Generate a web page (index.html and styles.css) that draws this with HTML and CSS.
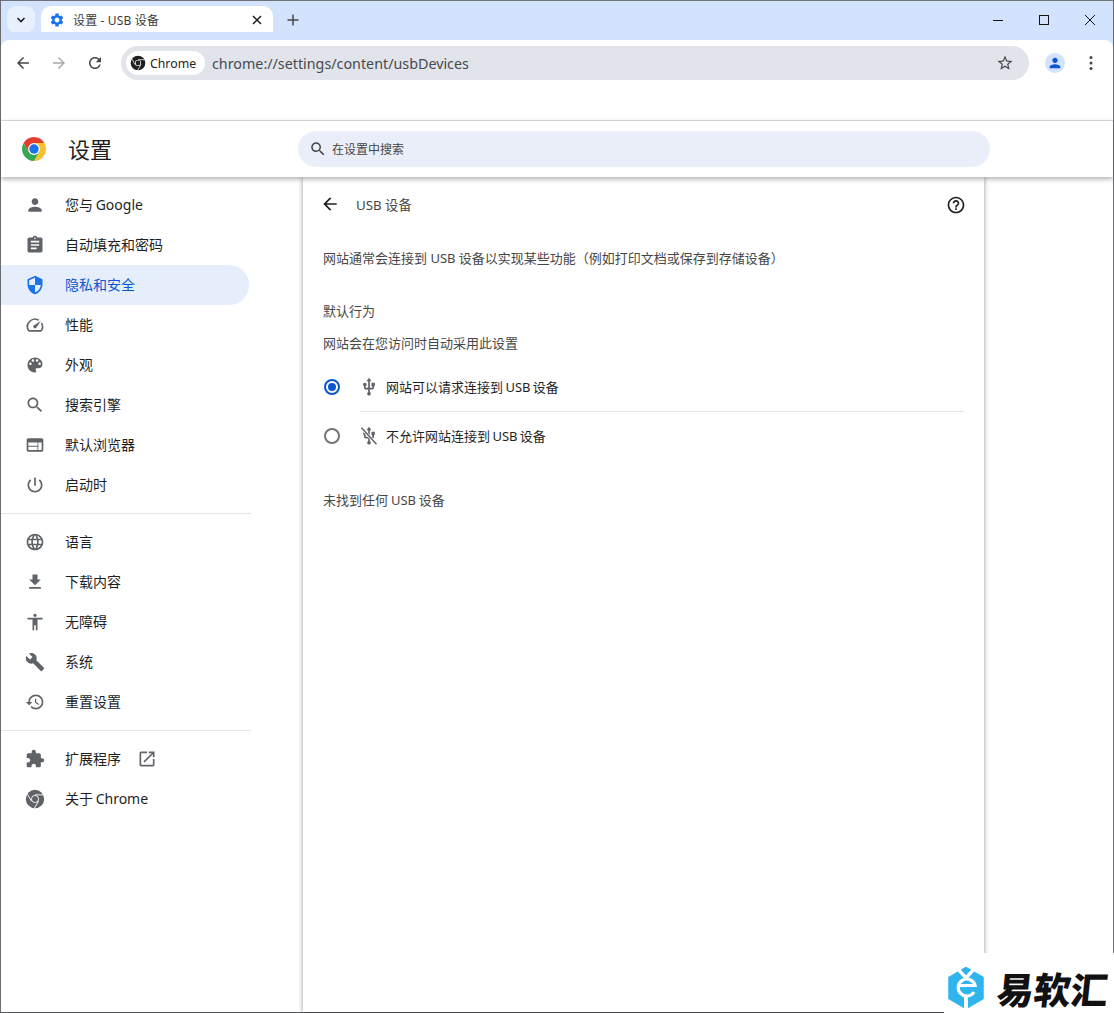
FILE: index.html
```html
<!DOCTYPE html>
<html lang="zh-CN">
<head>
<meta charset="utf-8">
<title>设置 - USB 设备</title>
<link rel="stylesheet" href="styles.css">
</head>
<body>
<svg class="sprite" width="0" height="0" aria-hidden="true">
  <defs>
    <symbol id="i-person" viewBox="0 0 24 24"><path d="M12 12c2.21 0 4-1.79 4-4s-1.79-4-4-4-4 1.79-4 4 1.79 4 4 4zm0 2c-2.67 0-8 1.34-8 4v2h16v-2c0-2.66-5.33-4-8-4z"/></symbol>
    <symbol id="i-assign" viewBox="0 0 24 24"><path d="M19 3h-4.18C14.4 1.84 13.3 1 12 1c-1.3 0-2.4.84-2.82 2H5c-1.1 0-2 .9-2 2v14c0 1.1.9 2 2 2h14c1.1 0 2-.9 2-2V5c0-1.1-.9-2-2-2zm-7 0c.55 0 1 .45 1 1s-.45 1-1 1-1-.45-1-1 .45-1 1-1zm2 14H7v-2h7v2zm3-4H7v-2h10v2zm0-4H7V7h10v2z"/></symbol>
    <symbol id="i-shield" viewBox="0 0 24 24"><path d="M12 1L3 5v6c0 5.55 3.84 10.74 9 12 5.16-1.26 9-6.45 9-12V5l-9-4zm0 10.99h7c-.53 4.12-3.28 7.79-7 8.94V12H5V6.3l7-3.11v8.8z"/></symbol>
    <symbol id="i-speed" viewBox="0 0 24 24"><path d="M20.38 8.57l-1.23 1.85a8 8 0 0 1-.22 7.58H5.07A8 8 0 0 1 15.58 6.85l1.85-1.23A10 10 0 0 0 3.35 19a2 2 0 0 0 1.72 1h13.85a2 2 0 0 0 1.74-1 10 10 0 0 0-.27-10.44zm-9.79 6.84a2 2 0 0 0 2.83 0l5.66-8.49-8.49 5.66a2 2 0 0 0 0 2.83z"/></symbol>
    <symbol id="i-palette" viewBox="0 0 24 24"><path d="M12 3c-4.97 0-9 4.03-9 9s4.03 9 9 9c.83 0 1.5-.67 1.5-1.5 0-.39-.15-.74-.39-1.01-.23-.26-.38-.61-.38-.99 0-.83.67-1.5 1.5-1.5H16c2.76 0 5-2.24 5-5 0-4.42-4.03-8-9-8zm-5.5 9c-.83 0-1.5-.67-1.5-1.5S5.67 9 6.5 9 8 9.67 8 10.5 7.33 12 6.5 12zm3-4C8.67 8 8 7.33 8 6.5S8.67 5 9.5 5s1.5.67 1.5 1.5S10.33 8 9.5 8zm5 0c-.83 0-1.5-.67-1.5-1.5S13.67 5 14.5 5s1.5.67 1.5 1.5S15.33 8 14.5 8zm3 4c-.83 0-1.5-.67-1.5-1.5S16.67 9 17.5 9s1.5.67 1.5 1.5-.67 1.5-1.5 1.5z"/></symbol>
    <symbol id="i-search" viewBox="0 0 24 24"><path d="M15.5 14h-.79l-.28-.27C15.41 12.59 16 11.11 16 9.5 16 5.91 13.09 3 9.5 3S3 5.91 3 9.5 5.91 16 9.5 16c1.61 0 3.09-.59 4.23-1.57l.27.28v.79l5 4.99L20.49 19l-4.99-5zm-6 0C7.01 14 5 11.99 5 9.5S7.01 5 9.5 5 14 7.01 14 9.5 11.99 14 9.5 14z"/></symbol>
    <symbol id="i-web" viewBox="0 0 24 24"><path d="M20 4H4c-1.1 0-1.99.9-1.99 2L2 18c0 1.1.9 2 2 2h16c1.1 0 2-.9 2-2V6c0-1.1-.9-2-2-2zm-5 14H4v-4h11v4zm0-5H4V9h11v4zm5 5h-4V9h4v9z"/></symbol>
    <symbol id="i-power" viewBox="0 0 24 24"><path d="M13 3h-2v10h2V3zm4.83 2.17l-1.42 1.42C17.99 7.86 19 9.81 19 12c0 3.87-3.13 7-7 7s-7-3.13-7-7c0-2.19 1.01-4.14 2.58-5.42L6.17 5.17C4.23 6.82 3 9.26 3 12c0 4.97 4.03 9 9 9s9-4.03 9-9c0-2.74-1.23-5.18-3.17-6.83z"/></symbol>
    <symbol id="i-lang" viewBox="0 0 24 24"><path d="M11.99 2C6.47 2 2 6.48 2 12s4.47 10 9.99 10C17.52 22 22 17.52 22 12S17.52 2 11.99 2zm6.93 6h-2.95c-.32-1.25-.78-2.45-1.38-3.56 1.84.63 3.37 1.91 4.33 3.56zM12 4.04c.83 1.2 1.48 2.53 1.91 3.96h-3.82c.43-1.43 1.08-2.76 1.91-3.96zM4.26 14C4.1 13.36 4 12.69 4 12s.1-1.36.26-2h3.38c-.08.66-.14 1.32-.14 2 0 .68.06 1.34.14 2H4.26zm.82 2h2.95c.32 1.25.78 2.45 1.38 3.56-1.84-.63-3.37-1.9-4.33-3.56zm2.95-8H5.08c.96-1.66 2.49-2.93 4.33-3.56C8.81 5.55 8.35 6.75 8.03 8zM12 19.96c-.83-1.2-1.48-2.53-1.91-3.96h3.82c-.43 1.43-1.08 2.76-1.91 3.96zM14.34 14H9.66c-.09-.66-.16-1.32-.16-2 0-.68.07-1.35.16-2h4.68c.09.65.16 1.32.16 2 0 .68-.07 1.34-.16 2zm.25 5.56c.6-1.11 1.06-2.31 1.38-3.56h2.95c-.96 1.65-2.49 2.93-4.33 3.56zM16.36 14c.08-.66.14-1.32.14-2 0-.68-.06-1.34-.14-2h3.38c.16.64.26 1.31.26 2s-.1 1.36-.26 2h-3.38z"/></symbol>
    <symbol id="i-download" viewBox="0 0 24 24"><path d="M19 9h-4V3H9v6H5l7 7 7-7zM5 18v2h14v-2H5z"/></symbol>
    <symbol id="i-access" viewBox="0 0 24 24"><path d="M12 2c1.1 0 2 .9 2 2s-.9 2-2 2-2-.9-2-2 .9-2 2-2zm9 7h-6v13h-2v-6h-2v6H9V9H3V7h18v2z"/></symbol>
    <symbol id="i-build" viewBox="0 0 24 24"><path d="M22.7 19l-9.1-9.1c.9-2.3.4-5-1.5-6.9-2-2-5-2.4-7.4-1.3L9 6 6 9 1.6 4.7C.4 7.1.9 10.1 2.9 12.1c1.9 1.9 4.6 2.4 6.9 1.5l9.1 9.1c.4.4 1 .4 1.4 0l2.3-2.3c.5-.4.5-1.1.1-1.4z"/></symbol>
    <symbol id="i-restore" viewBox="0 0 24 24"><path d="M13 3c-4.97 0-9 4.03-9 9H1l3.89 3.89.07.14L9 12H6c0-3.87 3.13-7 7-7s7 3.13 7 7-3.13 7-7 7c-1.93 0-3.68-.79-4.94-2.06l-1.42 1.42C8.27 19.99 10.51 21 13 21c4.97 0 9-4.03 9-9s-4.03-9-9-9zm-1 5v5l4.28 2.54.72-1.21-3.5-2.08V8H12z"/></symbol>
    <symbol id="i-ext" viewBox="0 0 24 24"><path d="M20.5 11H19V7c0-1.1-.9-2-2-2h-4V3.5C13 2.12 11.88 1 10.5 1S8 2.12 8 3.5V5H4c-1.1 0-1.99.9-1.99 2v3.8H3.5c1.49 0 2.7 1.21 2.7 2.7s-1.21 2.7-2.7 2.7H2V20c0 1.1.9 2 2 2h3.8v-1.5c0-1.49 1.21-2.7 2.7-2.7 1.49 0 2.7 1.21 2.7 2.7V22H17c1.1 0 2-.9 2-2v-4h1.5c1.38 0 2.5-1.12 2.5-2.5S21.88 11 20.5 11z"/></symbol>
    <symbol id="i-open" viewBox="0 0 24 24"><path d="M19 19H5V5h7V3H5c-1.11 0-2 .9-2 2v14c0 1.1.89 2 2 2h14c1.1 0 2-.9 2-2v-7h-2v7zM14 3v2h3.59l-9.83 9.83 1.41 1.41L19 6.41V10h2V3h-7z"/></symbol>
    <symbol id="i-chrome" viewBox="0 0 24 24"><path fill-rule="evenodd" d="M12 1a11 11 0 1 0 0 22 11 11 0 0 0 0-22zM12 7.4a4.6 4.6 0 1 1 0 9.2 4.6 4.6 0 0 1 0-9.2z"/><circle cx="12" cy="12" r="3.6"/><path d="M12 7h10M7.7 14.5 2.7 5.8M16.3 14.5 11.3 23" fill="none" stroke="#fff" stroke-width="1.1"/></symbol>
    <symbol id="i-usb" viewBox="0 0 24 24"><path d="M15 7v4h1v2h-3V5h2l-3-4-3 4h2v8H8v-2.07c.7-.37 1.2-1.08 1.2-1.93 0-1.21-.99-2.2-2.2-2.2-1.21 0-2.2.99-2.2 2.2 0 .85.5 1.56 1.2 1.93V13c0 1.11.89 2 2 2h3v3.05c-.71.37-1.2 1.1-1.2 1.95 0 1.22.99 2.2 2.2 2.2 1.21 0 2.2-.98 2.2-2.2 0-.85-.49-1.58-1.2-1.95V15h3c1.11 0 2-.89 2-2v-2h1V7h-4z"/></symbol>
    <symbol id="i-back" viewBox="0 0 24 24"><path d="M20 11H7.83l5.59-5.59L12 4l-8 8 8 8 1.41-1.41L7.83 13H20v-2z"/></symbol>
    <symbol id="i-forward" viewBox="0 0 24 24"><path d="M4 11h12.17l-5.59-5.59L12 4l8 8-8 8-1.41-1.41L16.17 13H4v-2z"/></symbol>
    <symbol id="i-logo" viewBox="0 0 24 24">
      <path class="seg-r" d="M12 6H22.39A12 12 0 0 0 1.61 6L6.8 15Z"/>
      <path class="seg-y" d="M12 6H22.39A12 12 0 0 0 1.61 6L6.8 15Z" transform="rotate(120 12 12)"/>
      <path class="seg-g" d="M12 6H22.39A12 12 0 0 0 1.61 6L6.8 15Z" transform="rotate(240 12 12)"/>
      <circle cx="12" cy="12" r="5.9" fill="#fff"/><circle cx="12" cy="12" r="4.7" fill="#1a73e8"/>
    </symbol>
  </defs>
</svg>

<div class="window">
  <div class="tabstrip">
    <button class="tab-search" aria-label="搜索标签页"><svg class="ic10" viewBox="0 0 10 10"><path d="M1.5 3 5 6.5 8.5 3" fill="none" stroke="#1f1f1f" stroke-width="1.6"/></svg></button>
    <div class="tab">
      <svg class="favicon" viewBox="0 0 24 24"><path d="M19.14 12.94c.04-.3.06-.61.06-.94 0-.32-.02-.64-.07-.94l2.03-1.58c.18-.14.23-.41.12-.61l-1.92-3.32c-.12-.22-.37-.29-.59-.22l-2.39.96c-.5-.38-1.03-.7-1.62-.94l-.36-2.54c-.04-.24-.24-.41-.48-.41h-3.84c-.24 0-.43.17-.47.41l-.36 2.54c-.59.24-1.13.57-1.62.94l-2.39-.96c-.22-.08-.47 0-.59.22L2.74 8.87c-.12.21-.08.47.12.61l2.03 1.58c-.05.3-.09.63-.09.94s.02.64.07.94l-2.03 1.58c-.18.14-.23.41-.12.61l1.92 3.32c.12.22.37.29.59.22l2.39-.96c.5.38 1.03.7 1.62.94l.36 2.54c.05.24.24.41.48.41h3.84c.24 0 .44-.17.47-.41l.36-2.54c.59-.24 1.13-.56 1.62-.94l2.39.96c.22.08.47 0 .59-.22l1.92-3.32c.12-.22.07-.47-.12-.61l-2.01-1.58zM12 15.6c-1.98 0-3.6-1.62-3.6-3.6s1.62-3.6 3.6-3.6 3.6 1.62 3.6 3.6-1.62 3.6-3.6 3.6z"/></svg>
      <span class="tab-title">设置 - USB 设备</span>
      <svg class="tab-close" viewBox="0 0 10 10"><path d="M1 1 9 9M9 1 1 9" fill="none" stroke="#1f1f1f" stroke-width="1.5"/></svg>
    </div>
    <svg class="new-tab" viewBox="0 0 12 12"><path d="M6 .5v11M.5 6h11" fill="none" stroke="#474747" stroke-width="1.5"/></svg>
    <div class="win-controls">
      <svg class="win-btn" viewBox="0 0 12 12"><path d="M1 6.5h10" fill="none" stroke="#111" stroke-width="1"/></svg>
      <svg class="win-btn" viewBox="0 0 12 12"><rect x="1.5" y="1.5" width="9" height="9" fill="none" stroke="#111" stroke-width="1"/></svg>
      <svg class="win-btn" viewBox="0 0 12 12"><path d="M1 1 11 11M11 1 1 11" fill="none" stroke="#111" stroke-width="1"/></svg>
    </div>
  </div>

  <div class="toolbar">
    <div class="nav-row">
      <svg class="tb-ic"><use href="#i-back"/></svg>
      <svg class="tb-ic dim"><use href="#i-forward"/></svg>
      <svg class="tb-ic" viewBox="0 0 24 24"><path d="M17.65 6.35C16.2 4.9 14.21 4 12 4c-4.42 0-7.99 3.58-7.99 8s3.57 8 7.99 8c3.73 0 6.84-2.55 7.73-6h-2.08c-.82 2.33-3.04 4-5.65 4-3.31 0-6-2.69-6-6s2.69-6 6-6c1.66 0 3.14.69 4.22 1.78L13 11h7V4l-2.35 2.35z"/></svg>
      <div class="omnibox">
        <div class="chip"><svg class="chip-ic"><use href="#i-chrome"/></svg><span>Chrome</span></div>
        <span class="url">chrome://settings/content/usbDevices</span>
        <svg class="star" viewBox="0 0 24 24"><path d="M22 9.24l-7.19-.62L12 2 9.19 8.63 2 9.24l5.46 4.73L5.82 21 12 17.27 18.18 21l-1.63-7.03L22 9.24zM12 15.4l-3.76 2.27 1-4.28-3.32-2.88 4.38-.38L12 6.1l1.71 4.04 4.38.38-3.32 2.88 1 4.28L12 15.4z"/></svg>
      </div>
      <div class="avatar"><svg class="avatar-ic"><use href="#i-person"/></svg></div>
      <svg class="menu-ic" viewBox="0 0 4 16"><circle cx="2" cy="2.5" r="1.5"/><circle cx="2" cy="8" r="1.5"/><circle cx="2" cy="13.5" r="1.5"/></svg>
    </div>
  </div>

  <header class="settings-head">
    <svg class="logo"><use href="#i-logo"/></svg>
    <h1 class="head-title">设置</h1>
    <div class="searchbox"><svg class="search-ic"><use href="#i-search"/></svg><span>在设置中搜索</span></div>
  </header>

  <div class="page">
    <nav class="sidebar">
      <a class="item"><svg class="nav-ic"><use href="#i-person"/></svg><span>您与 Google</span></a>
      <a class="item"><svg class="nav-ic"><use href="#i-assign"/></svg><span>自动填充和密码</span></a>
      <a class="item active"><svg class="nav-ic"><use href="#i-shield"/></svg><span>隐私和安全</span></a>
      <a class="item"><svg class="nav-ic"><use href="#i-speed"/></svg><span>性能</span></a>
      <a class="item"><svg class="nav-ic"><use href="#i-palette"/></svg><span>外观</span></a>
      <a class="item"><svg class="nav-ic"><use href="#i-search"/></svg><span>搜索引擎</span></a>
      <a class="item"><svg class="nav-ic"><use href="#i-web"/></svg><span>默认浏览器</span></a>
      <a class="item"><svg class="nav-ic"><use href="#i-power"/></svg><span>启动时</span></a>
      <div class="rule"></div>
      <a class="item"><svg class="nav-ic"><use href="#i-lang"/></svg><span>语言</span></a>
      <a class="item"><svg class="nav-ic"><use href="#i-download"/></svg><span>下载内容</span></a>
      <a class="item"><svg class="nav-ic"><use href="#i-access"/></svg><span>无障碍</span></a>
      <a class="item"><svg class="nav-ic"><use href="#i-build"/></svg><span>系统</span></a>
      <a class="item"><svg class="nav-ic"><use href="#i-restore"/></svg><span>重置设置</span></a>
      <div class="rule"></div>
      <a class="item"><svg class="nav-ic"><use href="#i-ext"/></svg><span>扩展程序</span><svg class="open-ic"><use href="#i-open"/></svg></a>
      <a class="item"><svg class="nav-ic"><use href="#i-chrome"/></svg><span>关于 Chrome</span></a>
    </nav>

    <main class="card">
      <div class="card-head">
        <svg class="back-ic"><use href="#i-back"/></svg>
        <h2 class="card-title">USB 设备</h2>
        <svg class="help-ic" viewBox="0 0 24 24"><path d="M11 18h2v-2h-2v2zm1-16C6.48 2 2 6.48 2 12s4.48 10 10 10 10-4.48 10-10S17.52 2 12 2zm0 18c-4.41 0-8-3.59-8-8s3.59-8 8-8 8 3.59 8 8-3.59 8-8 8zm0-14c-2.21 0-4 1.79-4 4h2c0-1.1.9-2 2-2s2 .9 2 2c0 2-3 1.75-3 5h2c0-2.25 3-2.5 3-5 0-2.21-1.79-4-4-4z"/></svg>
      </div>
      <p class="desc">网站通常会连接到 USB 设备以实现某些功能（例如打印文档或保存到存储设备）</p>
      <p class="sect">默认行为</p>
      <p class="sub">网站会在您访问时自动采用此设置</p>
      <div class="option first">
        <span class="radio on"></span>
        <svg class="usb-ic"><use href="#i-usb"/></svg>
        <span class="opt-text">网站可以请求连接到 USB 设备</span>
      </div>
      <div class="option-rule"></div>
      <div class="option">
        <span class="radio"></span>
        <svg class="usb-ic" viewBox="0 0 24 24"><use href="#i-usb" width="24" height="24"/><path d="M3 2.5 21 22" fill="none" stroke="#fff" stroke-width="3.4"/><path d="M3 2 21 22" fill="none" stroke="#5f6368" stroke-width="1.8"/></svg>
        <span class="opt-text">不允许网站连接到 USB 设备</span>
      </div>
      <p class="none">未找到任何 USB 设备</p>
    </main>
    <div class="right-gutter"></div>
  </div>
</div>

<aside class="watermark">
  <svg class="wm-logo" viewBox="0 0 36 42">
    <path d="M18 .5 35 10.5V31.5L18 41.5 1 31.5V10.5Z" fill="#2fb4ee" stroke="#2fb4ee" stroke-width="1.5" stroke-linejoin="round"/>
    <path d="M9 1 18 11 27 1" fill="none" stroke="#fff" stroke-width="3.4"/>
    <path d="M18 30V42" stroke="#fff" stroke-width="4"/>
    <path d="M26 25A8.5 8.5 0 1 1 27 18.5H10" fill="none" stroke="#fff" stroke-width="3.2"/>
  </svg>
  <span class="wm-text">易软汇</span>
</aside>
</body>
</html>
```
FILE: styles.css
```css
* { box-sizing: border-box; }
html, body { margin: 0; padding: 0; }
body {
  width: 1114px;
  height: 1013px;
  overflow: hidden;
  position: relative;
  background: #fff;
  font-family: "Noto Sans", "Noto Sans CJK SC", sans-serif;
  color: #1f1f1f;
}
.sprite { position: absolute; }
.window {
  width: 1114px;
  height: 1013px;
  display: flex;
  flex-direction: column;
  border-top: 1px solid #6f7378;
  border-left: 1px solid #6a6c6f;
  border-right: 1px solid #6a6c6f;
  border-bottom: 1px solid #55585b;
  background: #fff;
}

/* tab strip */
.tabstrip {
  height: 39px;
  flex: none;
  display: flex;
  align-items: flex-start;
  background: #d3e3fd;
  position: relative;
}
.tab-search {
  width: 28px;
  height: 27px;
  margin: 5px 0 0 6px;
  border: 0;
  border-radius: 9px;
  background: #e9f0fd;
  display: flex;
  align-items: center;
  justify-content: center;
  padding: 0;
}
.ic10 { width: 10px; height: 10px; }
.tab {
  width: 232px;
  height: 34px;
  margin: 5px 0 0 6px;
  padding: 0 11px 6px 8px;
  background: #fff;
  border-radius: 10px 10px 0 0;
  display: flex;
  align-items: center;
  position: relative;
}
.tab::before, .tab::after {
  content: "";
  position: absolute;
  bottom: 0;
  width: 10px;
  height: 10px;
}
.tab::before { left: -10px; background: radial-gradient(circle at 0 0, #d3e3fd 10px, #fff 10.5px); }
.tab::after { right: -10px; background: radial-gradient(circle at 100% 0, #d3e3fd 10px, #fff 10.5px); }
.favicon { width: 16px; height: 16px; fill: #1a73e8; flex: none; }
.tab-title { margin-left: 8px; font-size: 12px; letter-spacing: .15px; flex: 1; color: #3c3c3c; white-space: nowrap; }
.tab-close { width: 10px; height: 10px; }
.new-tab { width: 12px; height: 12px; margin: 13px 0 0 14px; }
.win-controls { margin-left: auto; display: flex; gap: 34px; margin-top: 13px; padding-right: 17px; }
.win-btn { width: 12px; height: 12px; }

/* toolbar */
.toolbar {
  height: 81px;
  flex: none;
  background: #fff;
  border-bottom: 1px solid #dfdfdf;
  border-radius: 8px 8px 0 0;
  box-shadow: 0 -8px 0 #d3e3fd;
  position: relative;
  padding-top: 6px;
}
.nav-row { height: 34px; display: flex; align-items: center; padding-left: 13px; }
.tb-ic { width: 18px; height: 18px; fill: #474747; margin-right: 18px; flex: none; }
.tb-ic.dim { fill: #a9abad; }
.omnibox {
  width: 908px;
  height: 34px;
  margin-left: -1px;
  border-radius: 17px;
  background: #e1e4ea;
  display: flex;
  align-items: center;
  padding: 0 15px 0 5px;
  flex: none;
}
.chip {
  height: 24px;
  width: 79px;
  border-radius: 12px;
  background: #fff;
  display: flex;
  align-items: center;
  gap: 4px;
  padding-left: 4px;
  font-size: 12.3px;
  color: #1f1f1f;
}
.chip-ic { width: 16px; height: 16px; fill: #1f1f1f; }
.url { margin-left: 7px; font-size: 14.3px; color: #474a4f; flex: 1; }
.star { width: 18px; height: 18px; fill: #474747; }
.avatar {
  width: 20px;
  height: 20px;
  margin-left: 16px;
  border-radius: 50%;
  background: #d3e3fd;
  display: flex;
  align-items: center;
  justify-content: center;
  flex: none;
}
.avatar-ic { width: 16px; height: 16px; fill: #0b57d0; }
.menu-ic { width: 4px; height: 16px; margin-left: 24px; fill: #474747; flex: none; }

/* settings header */
.settings-head {
  height: 56px;
  flex: none;
  display: flex;
  align-items: center;
  background: #fff;
  position: relative;
  z-index: 2;
  box-shadow: 0 2px 5px rgba(0, 0, 0, .32);
  padding-left: 21px;
}
.logo { width: 24px; height: 24px; flex: none; }
.seg-r { fill: #e53d30; }
.seg-y { fill: #fbc02d; }
.seg-g { fill: #34a853; }
.head-title { margin: 0 0 0 22px; width: 208px; font-size: 22px; font-weight: 400; color: #1f1f1f; line-height: 30px; }
.searchbox {
  width: 692px;
  height: 36px;
  margin-left: 22px;
  border-radius: 18px;
  background: #eaeef8;
  display: flex;
  align-items: center;
  padding-left: 11px;
  font-size: 12px;
  color: #474747;
}
.search-ic { width: 18px; height: 18px; fill: #474747; margin-right: 5px; }

/* page */
.page { flex: 1; display: flex; min-height: 0; }
.sidebar { width: 302px; flex: none; padding-top: 8px; }
.item {
  height: 40px;
  width: 248px;
  display: flex;
  align-items: center;
  padding-left: 24px;
  font-size: 14px;
  color: #1f1f1f;
  border-radius: 0 20px 20px 0;
}
.item > span { margin-bottom: 2px; word-spacing: -1px; }
.item.active { background: #e6eefc; color: #0b57d0; }
.item.active .nav-ic { fill: #1a73e8; }
.nav-ic { width: 20px; height: 20px; fill: #5f6368; margin-right: 20px; flex: none; }
.open-ic { width: 20px; height: 20px; margin-left: 16px; fill: #5f6368; }
.rule { height: 1px; width: 250px; background: #e6e6e6; margin: 8px 0; }
.card {
  width: 681px;
  flex: none;
  background: #fff;
  box-shadow: 0 0 5px rgba(0, 0, 0, .42);
  padding: 0 20px;
  font-size: 13px;
  color: #474747;
}
.right-gutter { flex: 1; }
.card-head { height: 54px; display: flex; align-items: center; }
.back-ic { width: 20px; height: 20px; fill: #1f1f1f; flex: none; margin-left: -3px; }
.card-title { margin: 0 0 0 16px; font-size: 13.3px; font-weight: 400; color: #474747; flex: 1; }
.help-ic { width: 20px; height: 20px; fill: #1f1f1f; margin-right: -2px; margin-top: 2px; }
.desc, .sect, .sub, .none { margin: 0; line-height: 20px; }
.desc { margin-top: 17px; }
.sect { margin-top: 33px; }
.sub { margin-top: 12px; }
.option { height: 48px; display: flex; align-items: center; }
.option.first { margin-top: 10px; height: 48px; }
.option-rule { height: 1px; background: #e6e6e6; margin-left: 37px; }
.radio {
  width: 16px;
  height: 16px;
  margin-left: 1px;
  border-radius: 50%;
  border: 2px solid #757575;
  flex: none;
  position: relative;
}
.radio.on { border-color: #0b57d0; }
.radio.on::after {
  content: "";
  position: absolute;
  inset: 2px;
  border-radius: 50%;
  background: #0b57d0;
}
.usb-ic { width: 20px; height: 20px; fill: #5f6368; margin-left: 19px; margin-right: 7px; flex: none; }
.opt-text { color: #1f1f1f; margin-bottom: 2px; word-spacing: -1px; }
.none { margin-top: 30px; word-spacing: -.5px; }

/* overlay watermark */
.watermark {
  position: absolute;
  right: 0;
  bottom: 0;
  width: 170px;
  height: 60px;
  background: #fff;
  display: flex;
  align-items: flex-start;
  padding: 14px 0 0 4px;
  gap: 11px;
}
.wm-logo { width: 36px; height: 42px; flex: none; }
.wm-text {
  font-family: "Noto Sans CJK SC", sans-serif;
  font-size: 37px;
  font-weight: 900;
  color: #111;
  line-height: 42px;
  white-space: nowrap;
  transform: skewX(-6deg);
  transform-origin: 0 100%;
}
```
